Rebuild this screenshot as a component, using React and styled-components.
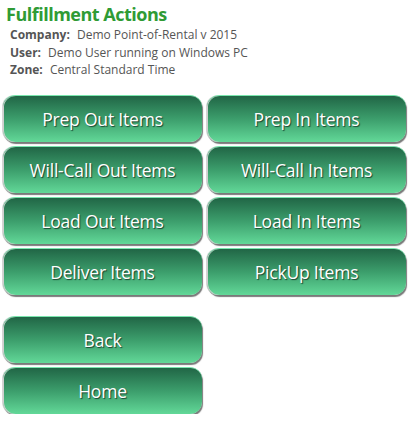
import React from "react";
import styled, { createGlobalStyle } from "styled-components";

const Global = createGlobalStyle`
  html, body { margin: 0; padding: 0; background: #fff; }
  body { font-family: "Open Sans", "Noto Sans", sans-serif; }
`;

const Page = styled.div`
  padding: 2px 3px 0 3px;
  width: 410px;
  box-sizing: border-box;
`;

const Title = styled.h1`
  margin: 0 0 0 3px;
  font-size: 18px;
  line-height: 24px;
  font-weight: 700;
  letter-spacing: -0.5px;
  color: #2f9b35;
`;

const Info = styled.div`
  margin: 0 0 0 7px;
  font-size: 12px;
  line-height: 17.5px;
  color: #555;
`;

const Label = styled.span`
  font-weight: 700;
  color: #555;
  margin-right: 4px;
`;

const Grid = styled.div`
  display: grid;
  grid-template-columns: 199px 199px;
  column-gap: 5px;
  row-gap: 4px;
  margin-top: ${(p) => p.$top}px;
`;

const Button = styled.button`
  height: 47px;
  border-radius: 12px;
  border: none;
  border-top: 1px solid #7ae6ae;
  background: linear-gradient(to bottom, #216646 0%, #3c9e6c 50%, #62d898 100%);
  box-shadow: inset 1px 0 0 #cfcfcf, -1px 0 0 #d4d4d4, 1px 2px 1px #7a7a7a, 0 1px 0 #8a8a8a;
  color: #fff;
  font-family: "Open Sans", "Noto Sans", sans-serif;
  font-size: 17.5px;
  letter-spacing: -0.2px;
  text-shadow: 1px 1px 1px #1a4430;
  cursor: pointer;
  padding: 0;
`;

const actions = [
  "Prep Out Items", "Prep In Items",
  "Will-Call Out Items", "Will-Call In Items",
  "Load Out Items", "Load In Items",
  "Deliver Items", "PickUp Items",
];

export default function App() {
  return (
    <Page>
      <Global />
      <Title>Fulfillment Actions</Title>
      <Info>
        <div><Label>Company:</Label> Demo Point-of-Rental v 2015</div>
        <div><Label>User:</Label> Demo User running on Windows PC</div>
        <div><Label>Zone:</Label> Central Standard Time</div>
      </Info>
      <Grid $top={16}>
        {actions.map((a) => <Button key={a}>{a}</Button>)}
      </Grid>
      <Grid $top={21}>
        <Button>Back</Button>
        <span />
        <Button>Home</Button>
      </Grid>
    </Page>
  );
}
